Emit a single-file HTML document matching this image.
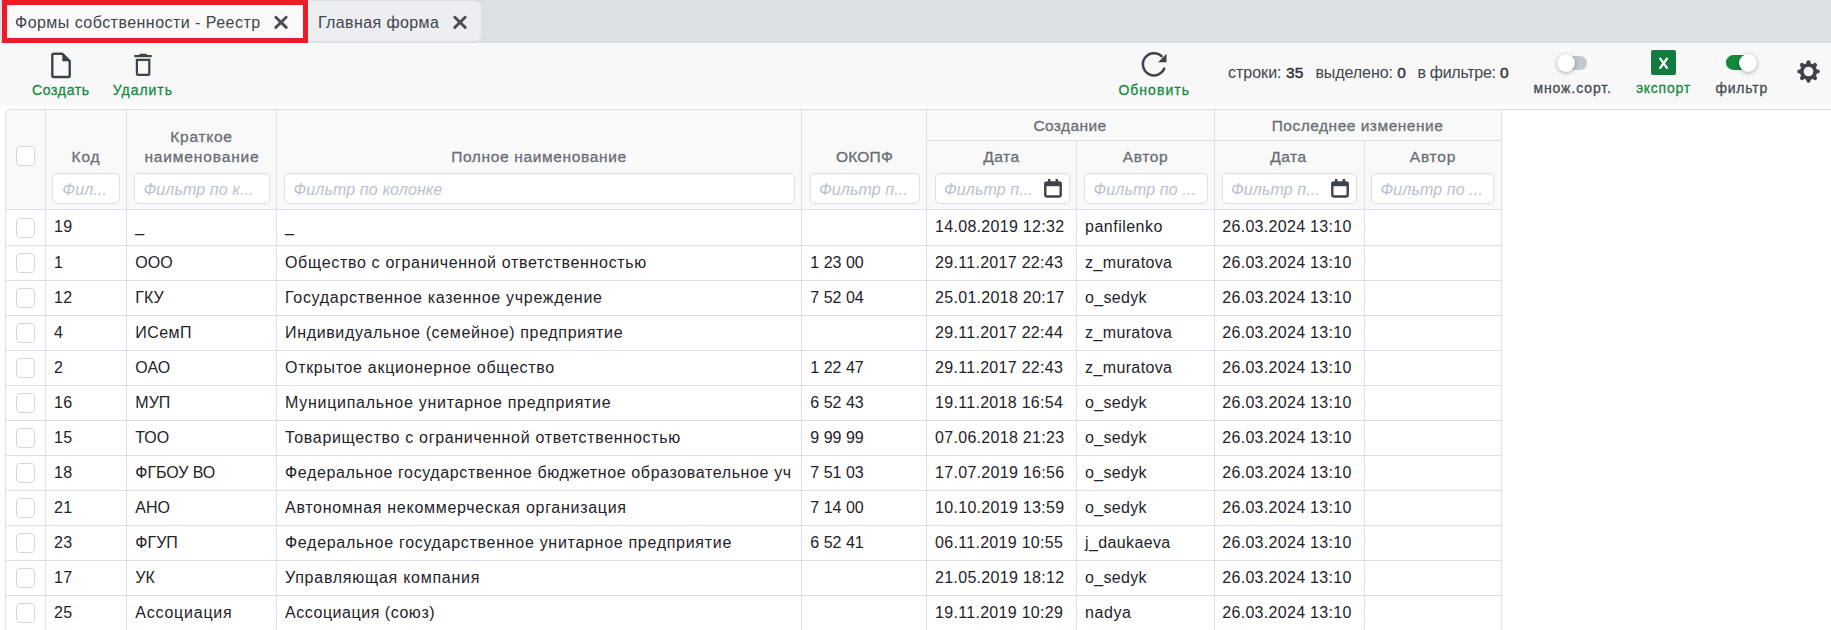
<!DOCTYPE html>
<html><head><meta charset="utf-8"><style>
html,body{margin:0;padding:0;width:1831px;height:630px;overflow:hidden;background:#fff;}
body{position:relative;font-family:"Liberation Sans", sans-serif;}
.t{position:absolute;white-space:nowrap;line-height:1;}
b{font-weight:400;-webkit-text-stroke:0.45px #30343b;color:#30343b;font-size:15.5px;}
</style></head><body>
<div style="position:absolute;left:0px;top:0px;width:1831px;height:43px;background:#dcdfe4;"></div>
<div style="position:absolute;left:2px;top:0px;width:306px;height:43px;background:#f9f9f9;border:5px solid #ed1c24;box-sizing:border-box;"></div>
<div style="position:absolute;left:308px;top:1px;width:173px;height:40px;background:#eceef1;border-radius:0 6px 6px 0;"></div>
<div class="t" style="left:15.00px;top:15.46px;font-size:16px;font-weight:400;color:#41454c;letter-spacing:0.465px;"><span id="tab1">Формы собственности - Реестр</span></div>
<div class="t" style="left:317.90px;top:15.46px;font-size:16px;font-weight:400;color:#41454c;letter-spacing:0.402px;"><span id="tab2">Главная форма</span></div>
<svg style="position:absolute;left:273px;top:14.2px" width="16" height="16" viewBox="0 0 16 16"><path d="M2.8 3.2L13.2 13.4M13.2 3.2L2.8 13.4" stroke="#4a4e56" stroke-width="2.9" stroke-linecap="round"/></svg>
<svg style="position:absolute;left:452px;top:14.2px" width="16" height="16" viewBox="0 0 16 16"><path d="M2.8 3.2L13.2 13.4M13.2 3.2L2.8 13.4" stroke="#4a4e56" stroke-width="2.9" stroke-linecap="round"/></svg>
<div style="position:absolute;left:0px;top:43px;width:1831px;height:62px;background:#f8f8f8;"></div>
<svg style="position:absolute;left:50px;top:52px" width="22" height="27" viewBox="0 0 22 27"><path d="M2.3 3.2Q2.3 1.8 3.7 1.8L12.4 1.8L19.7 9.1L19.7 23.6Q19.7 25 18.3 25L3.7 25Q2.3 25 2.3 23.6Z" fill="none" stroke="#3d424c" stroke-width="2.4" stroke-linejoin="round"/><path d="M12.3 1.8L12.3 9.2L19.7 9.2Z" fill="#3d424c"/></svg>
<svg style="position:absolute;left:133px;top:52px" width="20" height="26" viewBox="0 0 20 26"><rect x="1.2" y="3" width="17.5" height="2.2" fill="#3d424c"/><rect x="6.3" y="1.7" width="7.5" height="2" rx="0.8" fill="#3d424c"/><path d="M3.9 7.9L16.3 7.9L16.3 21.7Q16.3 22.9 15.1 22.9L5.1 22.9Q3.9 22.9 3.9 21.7Z" fill="none" stroke="#3d424c" stroke-width="2.2"/></svg>
<div class="t" style="left:32.10px;top:83.35px;font-size:14px;font-weight:400;color:#158a42;letter-spacing:0.629px;-webkit-text-stroke:0.3px #158a42;"><span id="lbl_create">Создать</span></div>
<div class="t" style="left:112.70px;top:83.35px;font-size:14px;font-weight:400;color:#158a42;letter-spacing:0.987px;-webkit-text-stroke:0.3px #158a42;"><span id="lbl_delete">Удалить</span></div>
<svg style="position:absolute;left:1138px;top:49px" width="32" height="32" viewBox="0 0 32 32"><path d="M26.56 18.73A11.1 11.1 0 1 1 24.25 7.87" fill="none" stroke="#3d424c" stroke-width="2.5"/><path d="M20 13.2L28.5 13.2L28.5 4.8Z" fill="#3d424c"/></svg>
<div class="t" style="left:1118.40px;top:82.85px;font-size:14px;font-weight:400;color:#158a42;letter-spacing:1.026px;-webkit-text-stroke:0.3px #158a42;"><span id="lbl_refresh">Обновить</span></div>
<div class="t" style="left:1227.90px;top:65.26px;font-size:16px;font-weight:400;color:#41454d;letter-spacing:0.024px;"><span id="st1">строки: <b>35</b></span></div>
<div class="t" style="left:1315.40px;top:65.26px;font-size:16px;font-weight:400;color:#41454d;letter-spacing:-0.068px;"><span id="st2">выделено: <b>0</b></span></div>
<div class="t" style="left:1417.40px;top:65.26px;font-size:16px;font-weight:400;color:#41454d;letter-spacing:-0.273px;"><span id="st3">в фильтре: <b>0</b></span></div>
<div style="position:absolute;left:1559px;top:55.5px;width:28px;height:14.2px;background:#c3c7ce;border-radius:7px;"></div>
<div style="position:absolute;left:1557px;top:54px;width:18px;height:18px;background:#fff;border-radius:50%;box-shadow:0 1px 4px rgba(0,0,0,0.32);"></div>
<div class="t" style="left:1533.40px;top:81.45px;font-size:14px;font-weight:400;color:#454a53;letter-spacing:0.906px;-webkit-text-stroke:0.3px #454a53;"><span id="lbl_multi">множ.сорт.</span></div>
<div style="position:absolute;left:1650.5px;top:50.3px;width:25px;height:25px;background:#127c3f;border-radius:2px;"></div>
<svg style="position:absolute;left:1650.5px;top:50.3px" width="25" height="25" viewBox="0 0 25 25"><path d="M8.7 7.9L16.5 18.6M16.5 7.9L8.7 18.6" stroke="#fff" stroke-width="2.3"/></svg>
<div class="t" style="left:1635.90px;top:81.45px;font-size:14px;font-weight:400;color:#158a42;letter-spacing:0.766px;-webkit-text-stroke:0.3px #158a42;"><span id="lbl_export">экспорт</span></div>
<div style="position:absolute;left:1726px;top:55.2px;width:28px;height:14.6px;background:#12893f;border-radius:7.3px;"></div>
<div style="position:absolute;left:1739px;top:54px;width:18px;height:18px;background:#fff;border-radius:50%;box-shadow:0 1px 4px rgba(0,0,0,0.32);"></div>
<div class="t" style="left:1715.40px;top:81.45px;font-size:14px;font-weight:400;color:#454a53;letter-spacing:0.815px;-webkit-text-stroke:0.3px #454a53;"><span id="lbl_filter">фильтр</span></div>
<svg style="position:absolute;left:1796.5px;top:60.2px" width="23" height="23" viewBox="0 0 23 23"><mask id="gm"><rect width="23" height="23" fill="#fff"/><circle cx="11.5" cy="11.5" r="4.8" fill="#000"/></mask><g mask="url(#gm)"><circle cx="11.5" cy="11.5" r="8.6" fill="#3d424c"/><line x1="11.5" y1="11.5" x2="11.50" y2="2.30" stroke="#3d424c" stroke-width="4.1" stroke-linecap="round"/><line x1="11.5" y1="11.5" x2="18.01" y2="4.99" stroke="#3d424c" stroke-width="4.1" stroke-linecap="round"/><line x1="11.5" y1="11.5" x2="20.70" y2="11.50" stroke="#3d424c" stroke-width="4.1" stroke-linecap="round"/><line x1="11.5" y1="11.5" x2="18.01" y2="18.01" stroke="#3d424c" stroke-width="4.1" stroke-linecap="round"/><line x1="11.5" y1="11.5" x2="11.50" y2="20.70" stroke="#3d424c" stroke-width="4.1" stroke-linecap="round"/><line x1="11.5" y1="11.5" x2="4.99" y2="18.01" stroke="#3d424c" stroke-width="4.1" stroke-linecap="round"/><line x1="11.5" y1="11.5" x2="2.30" y2="11.50" stroke="#3d424c" stroke-width="4.1" stroke-linecap="round"/><line x1="11.5" y1="11.5" x2="4.99" y2="4.99" stroke="#3d424c" stroke-width="4.1" stroke-linecap="round"/></g></svg>
<div style="position:absolute;left:0px;top:105px;width:1831px;height:525px;background:#fff;"></div>
<div style="position:absolute;left:5px;top:109px;width:1900px;height:600px;border:1px solid #dcdfe8;border-radius:4px;box-sizing:border-box;"></div>
<div style="position:absolute;left:6px;top:110px;width:1495px;height:99px;background:#f9f9f9;"></div>
<div style="position:absolute;left:45px;top:110px;width:1px;height:520px;background:#dcdfe8;"></div>
<div style="position:absolute;left:126px;top:110px;width:1px;height:520px;background:#dcdfe8;"></div>
<div style="position:absolute;left:276px;top:110px;width:1px;height:520px;background:#dcdfe8;"></div>
<div style="position:absolute;left:801px;top:110px;width:1px;height:520px;background:#dcdfe8;"></div>
<div style="position:absolute;left:926px;top:110px;width:1px;height:520px;background:#dcdfe8;"></div>
<div style="position:absolute;left:1076px;top:140px;width:1px;height:490px;background:#dcdfe8;"></div>
<div style="position:absolute;left:1214px;top:110px;width:1px;height:520px;background:#dcdfe8;"></div>
<div style="position:absolute;left:1364px;top:140px;width:1px;height:490px;background:#dcdfe8;"></div>
<div style="position:absolute;left:1501px;top:110px;width:1px;height:520px;background:#dcdfe8;"></div>
<div style="position:absolute;left:926px;top:140px;width:575px;height:1px;background:#dcdfe8;"></div>
<div style="position:absolute;left:6px;top:209px;width:1495px;height:1px;background:#dcdfe8;"></div>
<div style="position:absolute;left:6px;top:245px;width:1495px;height:1px;background:#dcdfe8;"></div>
<div style="position:absolute;left:6px;top:280px;width:1495px;height:1px;background:#dcdfe8;"></div>
<div style="position:absolute;left:6px;top:315px;width:1495px;height:1px;background:#dcdfe8;"></div>
<div style="position:absolute;left:6px;top:350px;width:1495px;height:1px;background:#dcdfe8;"></div>
<div style="position:absolute;left:6px;top:385px;width:1495px;height:1px;background:#dcdfe8;"></div>
<div style="position:absolute;left:6px;top:420px;width:1495px;height:1px;background:#dcdfe8;"></div>
<div style="position:absolute;left:6px;top:455px;width:1495px;height:1px;background:#dcdfe8;"></div>
<div style="position:absolute;left:6px;top:490px;width:1495px;height:1px;background:#dcdfe8;"></div>
<div style="position:absolute;left:6px;top:525px;width:1495px;height:1px;background:#dcdfe8;"></div>
<div style="position:absolute;left:6px;top:560px;width:1495px;height:1px;background:#dcdfe8;"></div>
<div style="position:absolute;left:6px;top:595px;width:1495px;height:1px;background:#dcdfe8;"></div>
<div style="position:absolute;left:6px;top:630px;width:1495px;height:1px;background:#dcdfe8;"></div>
<div class="t" style="left:570.00px;width:1000px;text-align:center;top:118.08px;font-size:15.5px;font-weight:400;color:#696d75;letter-spacing:0.410px;-webkit-text-stroke:0.3px #696d75;"><span id="h_create">Создание</span></div>
<div class="t" style="left:857.50px;width:1000px;text-align:center;top:118.08px;font-size:15.5px;font-weight:400;color:#696d75;letter-spacing:0.502px;-webkit-text-stroke:0.3px #696d75;"><span id="h_last">Последнее изменение</span></div>
<div class="t" style="left:-298.50px;width:1000px;text-align:center;top:128.88px;font-size:15.5px;font-weight:400;color:#696d75;letter-spacing:0.741px;-webkit-text-stroke:0.3px #696d75;"><span id="h_short1">Краткое</span></div>
<div class="t" style="left:-414.00px;width:1000px;text-align:center;top:148.68px;font-size:15.5px;font-weight:400;color:#696d75;letter-spacing:0.910px;-webkit-text-stroke:0.3px #696d75;"><span id="h_code">Код</span></div>
<div class="t" style="left:-298.00px;width:1000px;text-align:center;top:148.68px;font-size:15.5px;font-weight:400;color:#696d75;letter-spacing:0.860px;-webkit-text-stroke:0.3px #696d75;"><span id="h_short2">наименование</span></div>
<div class="t" style="left:39.00px;width:1000px;text-align:center;top:148.88px;font-size:15.5px;font-weight:400;color:#696d75;letter-spacing:0.649px;-webkit-text-stroke:0.3px #696d75;"><span id="h_full">Полное наименование</span></div>
<div class="t" style="left:364.50px;width:1000px;text-align:center;top:148.88px;font-size:15.5px;font-weight:400;color:#696d75;letter-spacing:0.172px;-webkit-text-stroke:0.3px #696d75;"><span id="h_okopf">ОКОПФ</span></div>
<div class="t" style="left:501.50px;width:1000px;text-align:center;top:148.88px;font-size:15.5px;font-weight:400;color:#696d75;letter-spacing:0.517px;-webkit-text-stroke:0.3px #696d75;"><span id="h_d1">Дата</span></div>
<div class="t" style="left:645.50px;width:1000px;text-align:center;top:148.88px;font-size:15.5px;font-weight:400;color:#696d75;letter-spacing:0.620px;-webkit-text-stroke:0.3px #696d75;"><span id="h_a1">Автор</span></div>
<div class="t" style="left:788.50px;width:1000px;text-align:center;top:148.88px;font-size:15.5px;font-weight:400;color:#696d75;letter-spacing:0.585px;-webkit-text-stroke:0.3px #696d75;"><span id="h_d2">Дата</span></div>
<div class="t" style="left:933.00px;width:1000px;text-align:center;top:148.88px;font-size:15.5px;font-weight:400;color:#696d75;letter-spacing:0.820px;-webkit-text-stroke:0.3px #696d75;"><span id="h_a2">Автор</span></div>
<div style="position:absolute;left:16px;top:146px;width:19px;height:20px;border:1px solid #d3d6dc;border-radius:4px;box-sizing:border-box;background:#fff;"></div>
<div style="position:absolute;left:52px;top:173px;width:68px;height:31px;background:#fff;border:1px solid #dcdfe8;border-radius:5px;box-sizing:border-box;"></div>
<div class="t" style="left:62.30px;top:182.36px;font-size:16px;font-weight:400;color:#bac1cc;letter-spacing:0.110px;font-style:italic;"><span id="ph0">Фил...</span></div>
<div style="position:absolute;left:134px;top:173px;width:136px;height:31px;background:#fff;border:1px solid #dcdfe8;border-radius:5px;box-sizing:border-box;"></div>
<div class="t" style="left:143.40px;top:182.36px;font-size:16px;font-weight:400;color:#bac1cc;letter-spacing:0.116px;font-style:italic;"><span id="ph1">Фильтр по к...</span></div>
<div style="position:absolute;left:284px;top:173px;width:511px;height:31px;background:#fff;border:1px solid #dcdfe8;border-radius:5px;box-sizing:border-box;"></div>
<div class="t" style="left:293.40px;top:182.36px;font-size:16px;font-weight:400;color:#bac1cc;letter-spacing:0.130px;font-style:italic;"><span id="ph2">Фильтр по колонке</span></div>
<div style="position:absolute;left:809.5px;top:173px;width:110.5px;height:31px;background:#fff;border:1px solid #dcdfe8;border-radius:5px;box-sizing:border-box;"></div>
<div class="t" style="left:818.90px;top:182.36px;font-size:16px;font-weight:400;color:#bac1cc;letter-spacing:0.120px;font-style:italic;"><span id="ph3">Фильтр п...</span></div>
<div style="position:absolute;left:934.5px;top:173px;width:135.5px;height:31px;background:#fff;border:1px solid #dcdfe8;border-radius:5px;box-sizing:border-box;"></div>
<div class="t" style="left:943.90px;top:182.36px;font-size:16px;font-weight:400;color:#bac1cc;letter-spacing:0.120px;font-style:italic;"><span id="ph4">Фильтр п...</span></div>
<div style="position:absolute;left:1084px;top:173px;width:124px;height:31px;background:#fff;border:1px solid #dcdfe8;border-radius:5px;box-sizing:border-box;"></div>
<div class="t" style="left:1093.40px;top:182.36px;font-size:16px;font-weight:400;color:#bac1cc;letter-spacing:0.117px;font-style:italic;"><span id="ph5">Фильтр по ...</span></div>
<div style="position:absolute;left:1221.5px;top:173px;width:135.5px;height:31px;background:#fff;border:1px solid #dcdfe8;border-radius:5px;box-sizing:border-box;"></div>
<div class="t" style="left:1230.90px;top:182.36px;font-size:16px;font-weight:400;color:#bac1cc;letter-spacing:0.120px;font-style:italic;"><span id="ph6">Фильтр п...</span></div>
<div style="position:absolute;left:1371px;top:173px;width:123px;height:31px;background:#fff;border:1px solid #dcdfe8;border-radius:5px;box-sizing:border-box;"></div>
<div class="t" style="left:1380.40px;top:182.36px;font-size:16px;font-weight:400;color:#bac1cc;letter-spacing:0.117px;font-style:italic;"><span id="ph7">Фильтр по ...</span></div>
<svg style="position:absolute;left:1042px;top:178px" width="22" height="22" viewBox="0 0 22 22"><path d="M3.3 6.2Q3.3 4.4 5.1 4.4L16.9 4.4Q18.7 4.4 18.7 6.2L18.7 16.7Q18.7 18.5 16.9 18.5L5.1 18.5Q3.3 18.5 3.3 16.7Z" fill="none" stroke="#3d424c" stroke-width="2.4"/><rect x="2.6" y="4" width="16.8" height="4.2" fill="#3d424c"/><rect x="6" y="1" width="2.5" height="3.5" fill="#3d424c"/><rect x="13.6" y="1" width="2.5" height="3.5" fill="#3d424c"/></svg>
<svg style="position:absolute;left:1329px;top:178px" width="22" height="22" viewBox="0 0 22 22"><path d="M3.3 6.2Q3.3 4.4 5.1 4.4L16.9 4.4Q18.7 4.4 18.7 6.2L18.7 16.7Q18.7 18.5 16.9 18.5L5.1 18.5Q3.3 18.5 3.3 16.7Z" fill="none" stroke="#3d424c" stroke-width="2.4"/><rect x="2.6" y="4" width="16.8" height="4.2" fill="#3d424c"/><rect x="6" y="1" width="2.5" height="3.5" fill="#3d424c"/><rect x="13.6" y="1" width="2.5" height="3.5" fill="#3d424c"/></svg>
<div style="position:absolute;left:16px;top:218.2px;width:19px;height:20px;border:1px solid #d3d6dc;border-radius:4px;box-sizing:border-box;background:#fff;"></div>
<div class="t" style="left:54.10px;top:219.16px;font-size:16px;font-weight:400;color:#1f2329;letter-spacing:0.267px;"><span id="r0c0">19</span></div>
<div class="t" style="left:135.30px;top:219.16px;font-size:16px;font-weight:400;color:#1f2329;letter-spacing:-1.337px;"><span id="r0c1">_</span></div>
<div class="t" style="left:285.00px;top:219.16px;font-size:16px;font-weight:400;color:#1f2329;letter-spacing:-1.337px;"><span id="r0c2">_</span></div>
<div class="t" style="left:935.10px;top:219.16px;font-size:16px;font-weight:400;color:#1f2329;letter-spacing:0.296px;"><span id="r0c4">14.08.2019 12:32</span></div>
<div class="t" style="left:1085.10px;top:219.16px;font-size:16px;font-weight:400;color:#1f2329;letter-spacing:0.474px;"><span id="r0c5">panfilenko</span></div>
<div class="t" style="left:1222.30px;top:219.16px;font-size:16px;font-weight:400;color:#1f2329;letter-spacing:0.296px;"><span id="r0c6">26.03.2024 13:10</span></div>
<div style="position:absolute;left:16px;top:253.2px;width:19px;height:20px;border:1px solid #d3d6dc;border-radius:4px;box-sizing:border-box;background:#fff;"></div>
<div class="t" style="left:54.10px;top:255.16px;font-size:16px;font-weight:400;color:#1f2329;letter-spacing:0.267px;"><span id="r1c0">1</span></div>
<div class="t" style="left:135.30px;top:255.16px;font-size:16px;font-weight:400;color:#1f2329;letter-spacing:0.000px;"><span id="r1c1">ООО</span></div>
<div class="t" style="left:285.00px;top:255.16px;font-size:16px;font-weight:400;color:#1f2329;letter-spacing:0.678px;"><span id="r1c2">Общество с ограниченной ответственностью</span></div>
<div class="t" style="left:810.30px;top:255.16px;font-size:16px;font-weight:400;color:#1f2329;letter-spacing:0.000px;"><span id="r1c3">1 23 00</span></div>
<div class="t" style="left:935.10px;top:255.16px;font-size:16px;font-weight:400;color:#1f2329;letter-spacing:0.293px;"><span id="r1c4">29.11.2017 22:43</span></div>
<div class="t" style="left:1085.10px;top:255.16px;font-size:16px;font-weight:400;color:#1f2329;letter-spacing:0.364px;"><span id="r1c5">z_muratova</span></div>
<div class="t" style="left:1222.30px;top:255.16px;font-size:16px;font-weight:400;color:#1f2329;letter-spacing:0.296px;"><span id="r1c6">26.03.2024 13:10</span></div>
<div style="position:absolute;left:16px;top:288.2px;width:19px;height:20px;border:1px solid #d3d6dc;border-radius:4px;box-sizing:border-box;background:#fff;"></div>
<div class="t" style="left:54.10px;top:290.16px;font-size:16px;font-weight:400;color:#1f2329;letter-spacing:0.267px;"><span id="r2c0">12</span></div>
<div class="t" style="left:135.30px;top:290.16px;font-size:16px;font-weight:400;color:#1f2329;letter-spacing:0.000px;"><span id="r2c1">ГКУ</span></div>
<div class="t" style="left:285.00px;top:290.16px;font-size:16px;font-weight:400;color:#1f2329;letter-spacing:0.699px;"><span id="r2c2">Государственное казенное учреждение</span></div>
<div class="t" style="left:810.30px;top:290.16px;font-size:16px;font-weight:400;color:#1f2329;letter-spacing:0.000px;"><span id="r2c3">7 52 04</span></div>
<div class="t" style="left:935.10px;top:290.16px;font-size:16px;font-weight:400;color:#1f2329;letter-spacing:0.296px;"><span id="r2c4">25.01.2018 20:17</span></div>
<div class="t" style="left:1085.10px;top:290.16px;font-size:16px;font-weight:400;color:#1f2329;letter-spacing:0.292px;"><span id="r2c5">o_sedyk</span></div>
<div class="t" style="left:1222.30px;top:290.16px;font-size:16px;font-weight:400;color:#1f2329;letter-spacing:0.296px;"><span id="r2c6">26.03.2024 13:10</span></div>
<div style="position:absolute;left:16px;top:323.2px;width:19px;height:20px;border:1px solid #d3d6dc;border-radius:4px;box-sizing:border-box;background:#fff;"></div>
<div class="t" style="left:54.10px;top:325.16px;font-size:16px;font-weight:400;color:#1f2329;letter-spacing:0.267px;"><span id="r3c0">4</span></div>
<div class="t" style="left:135.30px;top:325.16px;font-size:16px;font-weight:400;color:#1f2329;letter-spacing:0.414px;"><span id="r3c1">ИСемП</span></div>
<div class="t" style="left:285.00px;top:325.16px;font-size:16px;font-weight:400;color:#1f2329;letter-spacing:0.652px;"><span id="r3c2">Индивидуальное (семейное) предприятие</span></div>
<div class="t" style="left:935.10px;top:325.16px;font-size:16px;font-weight:400;color:#1f2329;letter-spacing:0.293px;"><span id="r3c4">29.11.2017 22:44</span></div>
<div class="t" style="left:1085.10px;top:325.16px;font-size:16px;font-weight:400;color:#1f2329;letter-spacing:0.364px;"><span id="r3c5">z_muratova</span></div>
<div class="t" style="left:1222.30px;top:325.16px;font-size:16px;font-weight:400;color:#1f2329;letter-spacing:0.296px;"><span id="r3c6">26.03.2024 13:10</span></div>
<div style="position:absolute;left:16px;top:358.2px;width:19px;height:20px;border:1px solid #d3d6dc;border-radius:4px;box-sizing:border-box;background:#fff;"></div>
<div class="t" style="left:54.10px;top:360.16px;font-size:16px;font-weight:400;color:#1f2329;letter-spacing:0.267px;"><span id="r4c0">2</span></div>
<div class="t" style="left:135.30px;top:360.16px;font-size:16px;font-weight:400;color:#1f2329;letter-spacing:0.000px;"><span id="r4c1">ОАО</span></div>
<div class="t" style="left:285.00px;top:360.16px;font-size:16px;font-weight:400;color:#1f2329;letter-spacing:0.698px;"><span id="r4c2">Открытое акционерное общество</span></div>
<div class="t" style="left:810.30px;top:360.16px;font-size:16px;font-weight:400;color:#1f2329;letter-spacing:0.000px;"><span id="r4c3">1 22 47</span></div>
<div class="t" style="left:935.10px;top:360.16px;font-size:16px;font-weight:400;color:#1f2329;letter-spacing:0.293px;"><span id="r4c4">29.11.2017 22:43</span></div>
<div class="t" style="left:1085.10px;top:360.16px;font-size:16px;font-weight:400;color:#1f2329;letter-spacing:0.364px;"><span id="r4c5">z_muratova</span></div>
<div class="t" style="left:1222.30px;top:360.16px;font-size:16px;font-weight:400;color:#1f2329;letter-spacing:0.296px;"><span id="r4c6">26.03.2024 13:10</span></div>
<div style="position:absolute;left:16px;top:393.2px;width:19px;height:20px;border:1px solid #d3d6dc;border-radius:4px;box-sizing:border-box;background:#fff;"></div>
<div class="t" style="left:54.10px;top:395.16px;font-size:16px;font-weight:400;color:#1f2329;letter-spacing:0.267px;"><span id="r5c0">16</span></div>
<div class="t" style="left:135.30px;top:395.16px;font-size:16px;font-weight:400;color:#1f2329;letter-spacing:0.000px;"><span id="r5c1">МУП</span></div>
<div class="t" style="left:285.00px;top:395.16px;font-size:16px;font-weight:400;color:#1f2329;letter-spacing:0.718px;"><span id="r5c2">Муниципальное унитарное предприятие</span></div>
<div class="t" style="left:810.30px;top:395.16px;font-size:16px;font-weight:400;color:#1f2329;letter-spacing:0.000px;"><span id="r5c3">6 52 43</span></div>
<div class="t" style="left:935.10px;top:395.16px;font-size:16px;font-weight:400;color:#1f2329;letter-spacing:0.293px;"><span id="r5c4">19.11.2018 16:54</span></div>
<div class="t" style="left:1085.10px;top:395.16px;font-size:16px;font-weight:400;color:#1f2329;letter-spacing:0.292px;"><span id="r5c5">o_sedyk</span></div>
<div class="t" style="left:1222.30px;top:395.16px;font-size:16px;font-weight:400;color:#1f2329;letter-spacing:0.296px;"><span id="r5c6">26.03.2024 13:10</span></div>
<div style="position:absolute;left:16px;top:428.2px;width:19px;height:20px;border:1px solid #d3d6dc;border-radius:4px;box-sizing:border-box;background:#fff;"></div>
<div class="t" style="left:54.10px;top:430.16px;font-size:16px;font-weight:400;color:#1f2329;letter-spacing:0.267px;"><span id="r6c0">15</span></div>
<div class="t" style="left:135.30px;top:430.16px;font-size:16px;font-weight:400;color:#1f2329;letter-spacing:0.000px;"><span id="r6c1">ТОО</span></div>
<div class="t" style="left:285.00px;top:430.16px;font-size:16px;font-weight:400;color:#1f2329;letter-spacing:0.684px;"><span id="r6c2">Товарищество с ограниченной ответственностью</span></div>
<div class="t" style="left:810.30px;top:430.16px;font-size:16px;font-weight:400;color:#1f2329;letter-spacing:0.000px;"><span id="r6c3">9 99 99</span></div>
<div class="t" style="left:935.10px;top:430.16px;font-size:16px;font-weight:400;color:#1f2329;letter-spacing:0.296px;"><span id="r6c4">07.06.2018 21:23</span></div>
<div class="t" style="left:1085.10px;top:430.16px;font-size:16px;font-weight:400;color:#1f2329;letter-spacing:0.292px;"><span id="r6c5">o_sedyk</span></div>
<div class="t" style="left:1222.30px;top:430.16px;font-size:16px;font-weight:400;color:#1f2329;letter-spacing:0.296px;"><span id="r6c6">26.03.2024 13:10</span></div>
<div style="position:absolute;left:16px;top:463.2px;width:19px;height:20px;border:1px solid #d3d6dc;border-radius:4px;box-sizing:border-box;background:#fff;"></div>
<div class="t" style="left:54.10px;top:465.16px;font-size:16px;font-weight:400;color:#1f2329;letter-spacing:0.267px;"><span id="r7c0">18</span></div>
<div class="t" style="left:135.30px;top:465.16px;font-size:16px;font-weight:400;color:#1f2329;letter-spacing:-0.075px;"><span id="r7c1">ФГБОУ ВО</span></div>
<div style="position:absolute;left:277px;top:456px;width:515px;height:34px;overflow:hidden;">
<div class="t" style="left:8.00px;top:9.16px;font-size:16px;font-weight:400;color:#1f2329;letter-spacing:0.625px;"><span id="r7c2">Федеральное государственное бюджетное образовательное уч</span></div>
</div>
<div class="t" style="left:810.30px;top:465.16px;font-size:16px;font-weight:400;color:#1f2329;letter-spacing:0.000px;"><span id="r7c3">7 51 03</span></div>
<div class="t" style="left:935.10px;top:465.16px;font-size:16px;font-weight:400;color:#1f2329;letter-spacing:0.296px;"><span id="r7c4">17.07.2019 16:56</span></div>
<div class="t" style="left:1085.10px;top:465.16px;font-size:16px;font-weight:400;color:#1f2329;letter-spacing:0.292px;"><span id="r7c5">o_sedyk</span></div>
<div class="t" style="left:1222.30px;top:465.16px;font-size:16px;font-weight:400;color:#1f2329;letter-spacing:0.296px;"><span id="r7c6">26.03.2024 13:10</span></div>
<div style="position:absolute;left:16px;top:498.2px;width:19px;height:20px;border:1px solid #d3d6dc;border-radius:4px;box-sizing:border-box;background:#fff;"></div>
<div class="t" style="left:54.10px;top:500.16px;font-size:16px;font-weight:400;color:#1f2329;letter-spacing:0.267px;"><span id="r8c0">21</span></div>
<div class="t" style="left:135.30px;top:500.16px;font-size:16px;font-weight:400;color:#1f2329;letter-spacing:0.000px;"><span id="r8c1">АНО</span></div>
<div class="t" style="left:285.00px;top:500.16px;font-size:16px;font-weight:400;color:#1f2329;letter-spacing:0.716px;"><span id="r8c2">Автономная некоммерческая организация</span></div>
<div class="t" style="left:810.30px;top:500.16px;font-size:16px;font-weight:400;color:#1f2329;letter-spacing:0.000px;"><span id="r8c3">7 14 00</span></div>
<div class="t" style="left:935.10px;top:500.16px;font-size:16px;font-weight:400;color:#1f2329;letter-spacing:0.296px;"><span id="r8c4">10.10.2019 13:59</span></div>
<div class="t" style="left:1085.10px;top:500.16px;font-size:16px;font-weight:400;color:#1f2329;letter-spacing:0.292px;"><span id="r8c5">o_sedyk</span></div>
<div class="t" style="left:1222.30px;top:500.16px;font-size:16px;font-weight:400;color:#1f2329;letter-spacing:0.296px;"><span id="r8c6">26.03.2024 13:10</span></div>
<div style="position:absolute;left:16px;top:533.2px;width:19px;height:20px;border:1px solid #d3d6dc;border-radius:4px;box-sizing:border-box;background:#fff;"></div>
<div class="t" style="left:54.10px;top:535.16px;font-size:16px;font-weight:400;color:#1f2329;letter-spacing:0.267px;"><span id="r9c0">23</span></div>
<div class="t" style="left:135.30px;top:535.16px;font-size:16px;font-weight:400;color:#1f2329;letter-spacing:0.000px;"><span id="r9c1">ФГУП</span></div>
<div class="t" style="left:285.00px;top:535.16px;font-size:16px;font-weight:400;color:#1f2329;letter-spacing:0.704px;"><span id="r9c2">Федеральное государственное унитарное предприятие</span></div>
<div class="t" style="left:810.30px;top:535.16px;font-size:16px;font-weight:400;color:#1f2329;letter-spacing:0.000px;"><span id="r9c3">6 52 41</span></div>
<div class="t" style="left:935.10px;top:535.16px;font-size:16px;font-weight:400;color:#1f2329;letter-spacing:0.293px;"><span id="r9c4">06.11.2019 10:55</span></div>
<div class="t" style="left:1085.10px;top:535.16px;font-size:16px;font-weight:400;color:#1f2329;letter-spacing:0.356px;"><span id="r9c5">j_daukaeva</span></div>
<div class="t" style="left:1222.30px;top:535.16px;font-size:16px;font-weight:400;color:#1f2329;letter-spacing:0.296px;"><span id="r9c6">26.03.2024 13:10</span></div>
<div style="position:absolute;left:16px;top:568.2px;width:19px;height:20px;border:1px solid #d3d6dc;border-radius:4px;box-sizing:border-box;background:#fff;"></div>
<div class="t" style="left:54.10px;top:570.16px;font-size:16px;font-weight:400;color:#1f2329;letter-spacing:0.267px;"><span id="r10c0">17</span></div>
<div class="t" style="left:135.30px;top:570.16px;font-size:16px;font-weight:400;color:#1f2329;letter-spacing:0.000px;"><span id="r10c1">УК</span></div>
<div class="t" style="left:285.00px;top:570.16px;font-size:16px;font-weight:400;color:#1f2329;letter-spacing:0.744px;"><span id="r10c2">Управляющая компания</span></div>
<div class="t" style="left:935.10px;top:570.16px;font-size:16px;font-weight:400;color:#1f2329;letter-spacing:0.296px;"><span id="r10c4">21.05.2019 18:12</span></div>
<div class="t" style="left:1085.10px;top:570.16px;font-size:16px;font-weight:400;color:#1f2329;letter-spacing:0.292px;"><span id="r10c5">o_sedyk</span></div>
<div class="t" style="left:1222.30px;top:570.16px;font-size:16px;font-weight:400;color:#1f2329;letter-spacing:0.296px;"><span id="r10c6">26.03.2024 13:10</span></div>
<div style="position:absolute;left:16px;top:603.2px;width:19px;height:20px;border:1px solid #d3d6dc;border-radius:4px;box-sizing:border-box;background:#fff;"></div>
<div class="t" style="left:54.10px;top:605.16px;font-size:16px;font-weight:400;color:#1f2329;letter-spacing:0.267px;"><span id="r11c0">25</span></div>
<div class="t" style="left:135.30px;top:605.16px;font-size:16px;font-weight:400;color:#1f2329;letter-spacing:0.765px;"><span id="r11c1">Ассоциация</span></div>
<div class="t" style="left:285.00px;top:605.16px;font-size:16px;font-weight:400;color:#1f2329;letter-spacing:0.534px;"><span id="r11c2">Ассоциация (союз)</span></div>
<div class="t" style="left:935.10px;top:605.16px;font-size:16px;font-weight:400;color:#1f2329;letter-spacing:0.293px;"><span id="r11c4">19.11.2019 10:29</span></div>
<div class="t" style="left:1085.10px;top:605.16px;font-size:16px;font-weight:400;color:#1f2329;letter-spacing:0.567px;"><span id="r11c5">nadya</span></div>
<div class="t" style="left:1222.30px;top:605.16px;font-size:16px;font-weight:400;color:#1f2329;letter-spacing:0.296px;"><span id="r11c6">26.03.2024 13:10</span></div>
</body></html>
